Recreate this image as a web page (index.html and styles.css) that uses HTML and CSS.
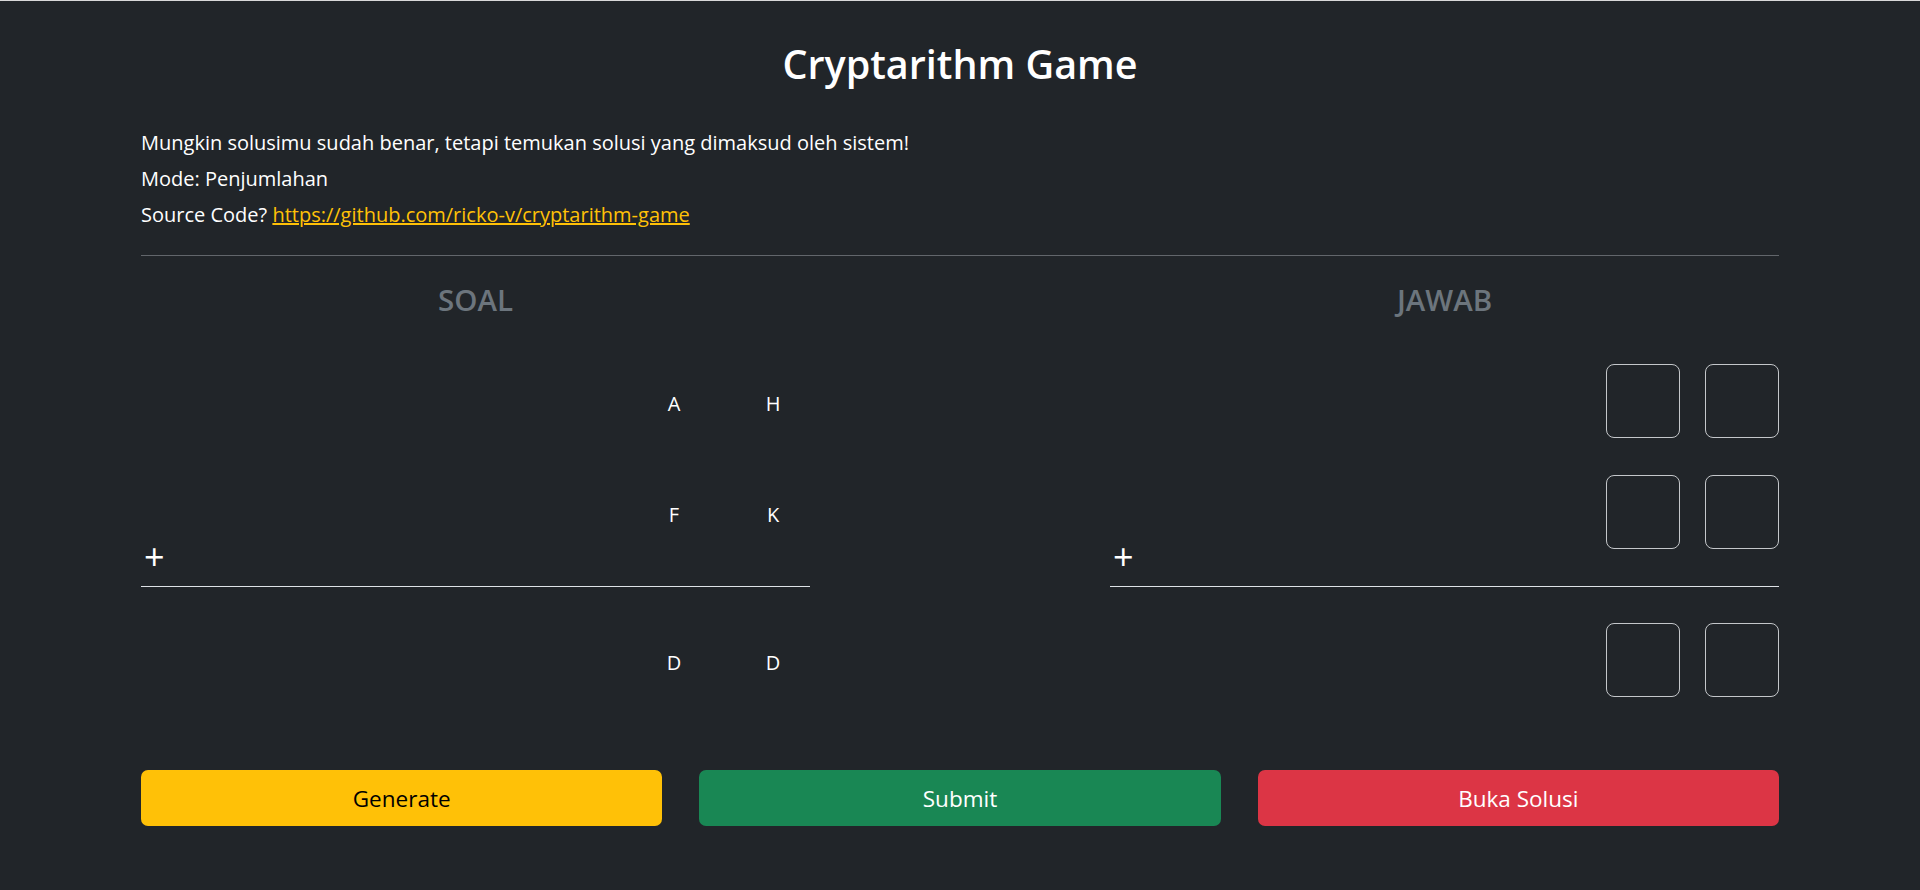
FILE: index.html
```html
<!DOCTYPE html>
<html lang="id">
<head>
<meta charset="utf-8">
<title>Cryptarithm Game</title>
<link rel="stylesheet" href="styles.css">
</head>
<body>
<main class="page">
  <h1 class="title">Cryptarithm Game</h1>
  <div class="info">
    <p>Mungkin solusimu sudah benar, tetapi temukan solusi yang dimaksud oleh sistem!</p>
    <p>Mode: Penjumlahan</p>
    <p>Source Code? <a href="#">https://github.com/ricko-v/cryptarithm-game</a></p>
  </div>
  <hr class="divider">
  <div class="board">
    <section class="side">
      <h2 class="side-title">SOAL</h2>
      <div class="row"><span class="cell letter">A</span><span class="cell letter">H</span></div>
      <div class="row sum-row"><span class="plus">+</span><div class="cells"><span class="cell letter">F</span><span class="cell letter">K</span></div></div>
      <div class="row"><span class="cell letter">D</span><span class="cell letter">D</span></div>
    </section>
    <section class="side">
      <h2 class="side-title">JAWAB</h2>
      <div class="row"><span class="cell box"></span><span class="cell box"></span></div>
      <div class="row sum-row"><span class="plus">+</span><div class="cells"><span class="cell box"></span><span class="cell box"></span></div></div>
      <div class="row"><span class="cell box"></span><span class="cell box"></span></div>
    </section>
  </div>
  <div class="actions">
    <button class="btn btn-yellow">Generate</button>
    <button class="btn btn-green">Submit</button>
    <button class="btn btn-red">Buka Solusi</button>
  </div>
</main>
</body>
</html>
```
FILE: styles.css
```css
* { box-sizing: border-box; }
html, body { margin: 0; padding: 0; }
body {
  background: #212529;
  color: #ffffff;
  font-family: "Open Sans", "Noto Sans", sans-serif;
  border-top: 1px solid #d9d9d9;
  min-height: 890px;
}
.page {
  padding: 0 141px;
}
.title {
  margin: 40px 0 0;
  text-align: center;
  font-size: 39.5px;
  font-weight: 600;
  line-height: 46px;
}
.info {
  margin-top: 38px;
}
.info p {
  margin: 0;
  font-size: 20px;
  line-height: 36px;
}
.info a {
  color: #ffc107;
  text-decoration: underline;
}
.divider {
  margin: 22px 0 0;
  border: 0;
  border-top: 1px solid #62666b;
  height: 0;
}
.board {
  display: grid;
  grid-template-columns: 1fr 300px 1fr;
}
.board .side:last-child { grid-column: 3; }
.side-title {
  margin: 24px 0 44px;
  text-align: center;
  color: #6c757d;
  font-size: 29.5px;
  font-weight: 600;
  line-height: 40px;
}
.row {
  display: flex;
  justify-content: flex-end;
  gap: 25px;
  margin-bottom: 37px;
}
.sum-row {
  justify-content: space-between;
  align-items: flex-end;
  border-bottom: 1px solid #dee2e6;
  padding-bottom: 0;
  margin-bottom: 36px;
}
.sum-row .cells {
  display: flex;
  gap: 25px;
  margin-bottom: 37px;
}
.plus {
  font-size: 36px;
  line-height: 36px;
  margin-bottom: 11px;
  padding-left: 3px;
}
.cell {
  width: 74px;
  height: 74px;
  display: flex;
  align-items: center;
  justify-content: center;
}
.letter {
  font-size: 20px;
  padding-top: 4px;
}
.box {
  border: 1px solid #c4c7ca;
  border-radius: 8px;
}
.actions {
  display: grid;
  grid-template-columns: repeat(3, 1fr);
  gap: 37px;
  margin-top: 36px;
}
.btn {
  height: 56px;
  border: 0;
  border-radius: 7px;
  font-family: inherit;
  font-size: 22.5px;
  color: #ffffff;
}
.btn-yellow { background: #ffc107; color: #000000; }
.btn-green { background: #198754; }
.btn-red { background: #dc3545; }
```
